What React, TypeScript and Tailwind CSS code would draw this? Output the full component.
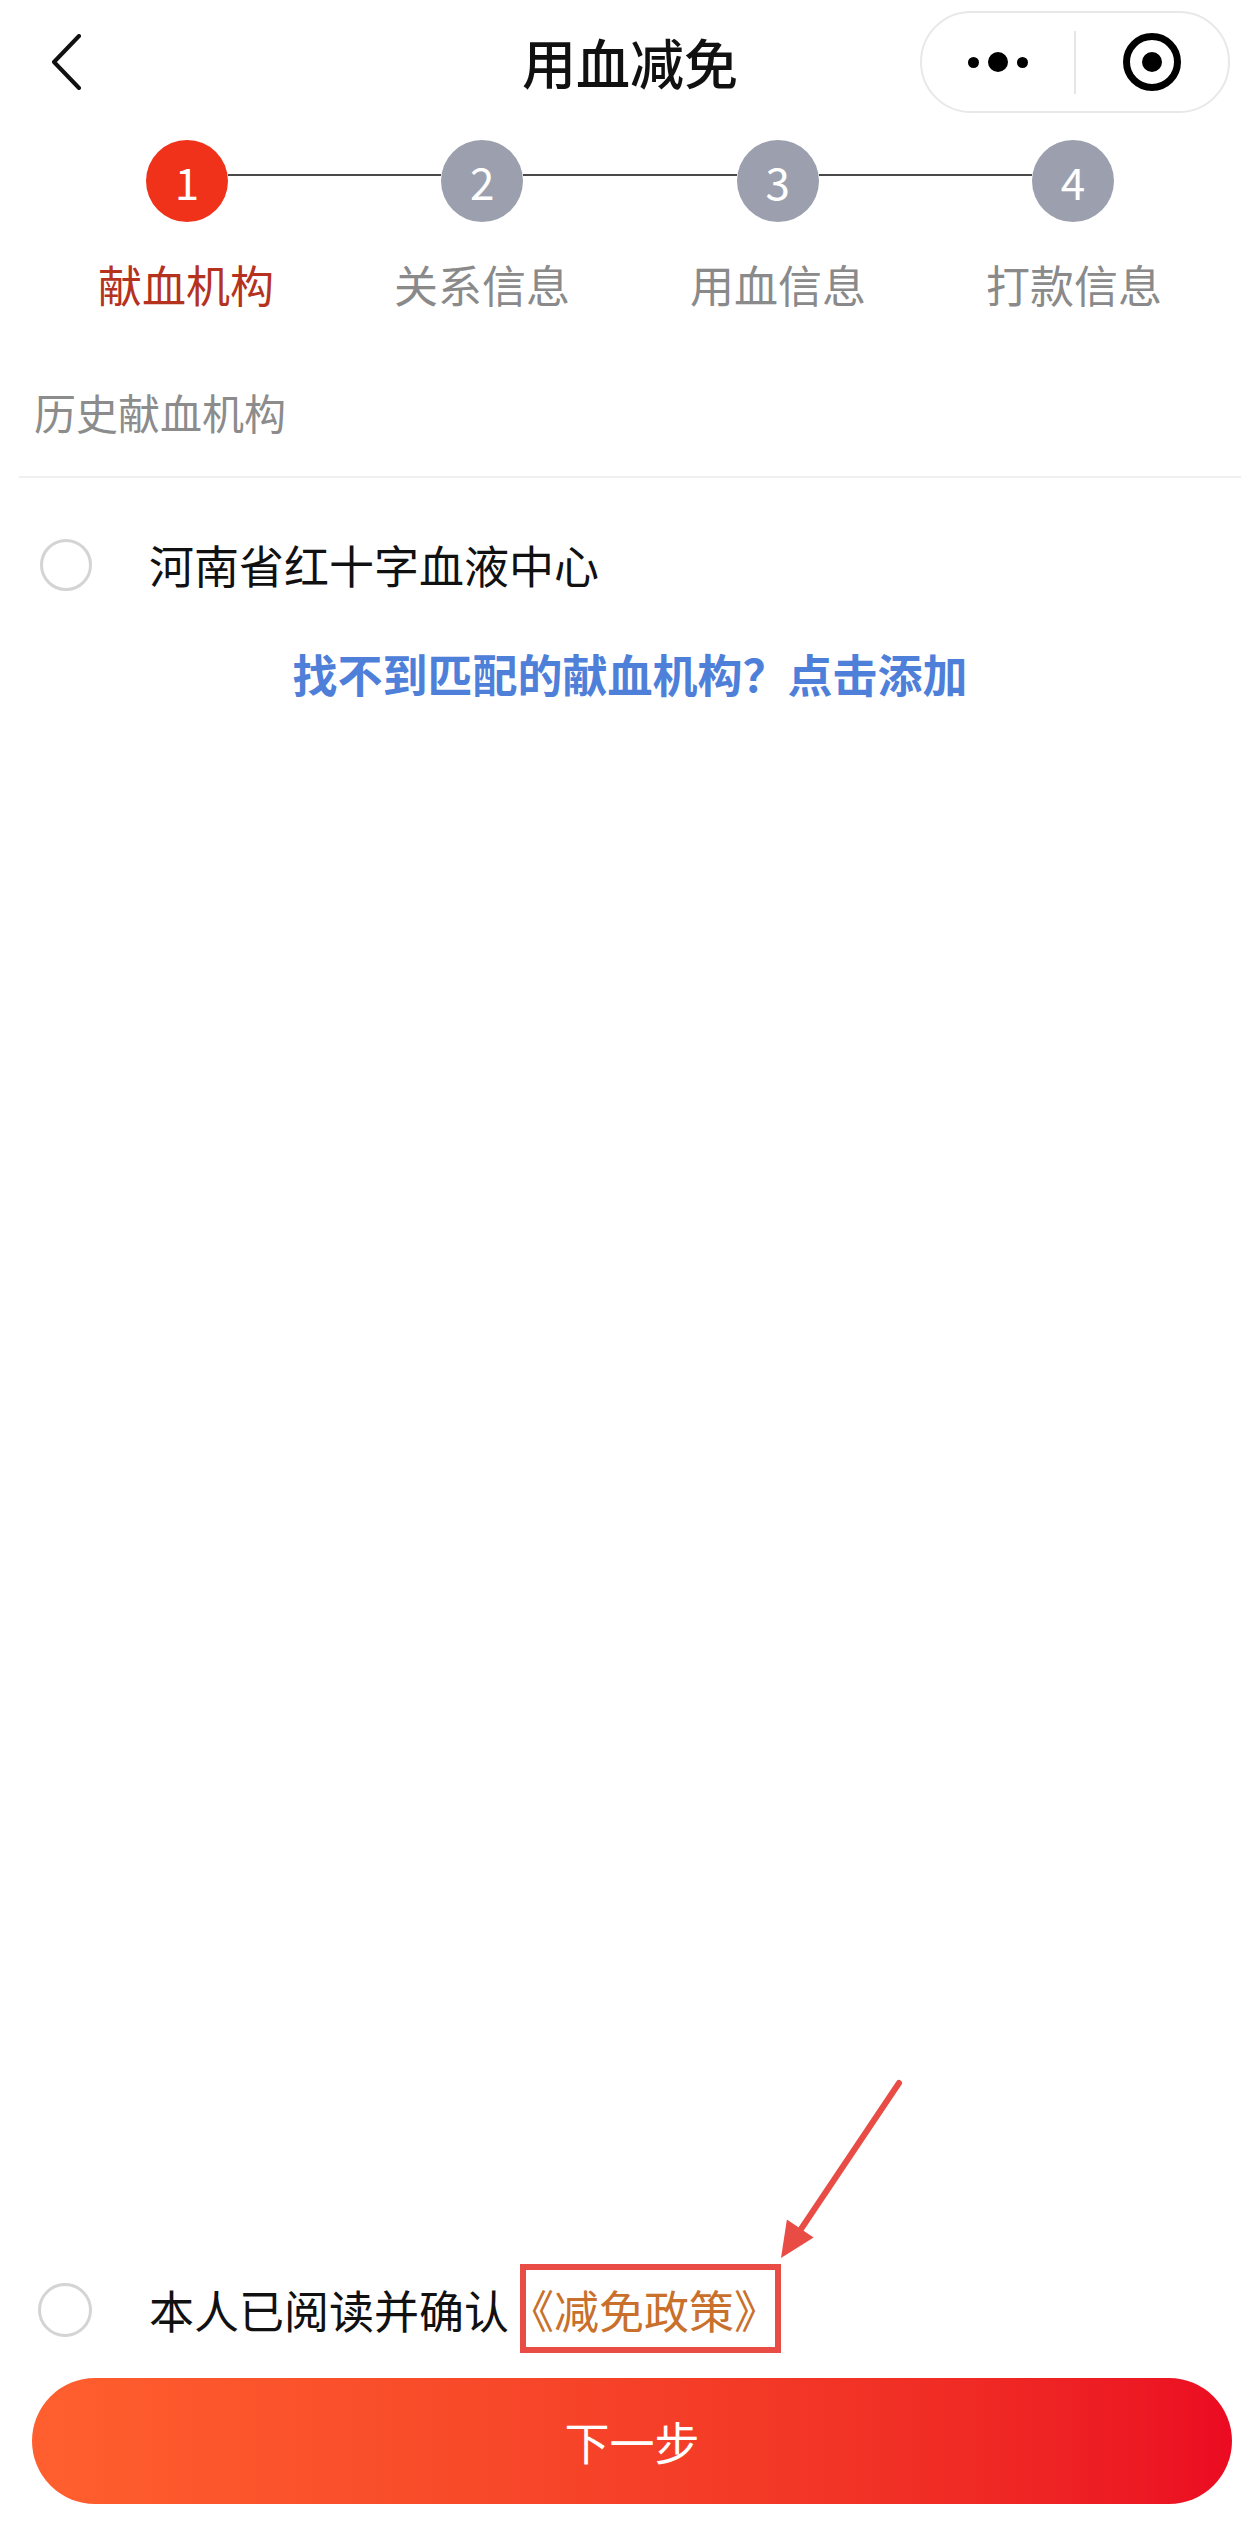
import React from "react";

const steps = ["献血机构", "关系信息", "用血信息", "打款信息"];

export default function App() {
  return (
    <div className="relative w-full h-[2533px] bg-white flex flex-col overflow-hidden font-['Noto_Sans_CJK_SC',sans-serif]">
      {/* Header */}
      <div className="grid grid-cols-[1fr_auto_1fr] items-center h-[124px]">
        <div className="flex items-center pl-[51px]">
          <svg width="32" height="56" viewBox="0 0 32 56" fill="none">
            <polyline points="28,2 3,28 28,54" stroke="#111" strokeWidth="4" strokeLinecap="round" strokeLinejoin="round" />
          </svg>
        </div>
        <div className="text-[54px] leading-[64px] font-medium text-[#111]">用血减免</div>
        <div className="flex justify-end pr-[30px]">
          <div className="flex items-center w-[310px] h-[102px] rounded-full border-[2px] border-[#e8e8e8] bg-white">
            <div className="flex-1 flex items-center justify-center gap-[9px]">
              <span className="w-[11px] h-[11px] rounded-full bg-black" />
              <span className="w-[20px] h-[20px] rounded-full bg-black" />
              <span className="w-[11px] h-[11px] rounded-full bg-black" />
            </div>
            <div className="w-[2px] h-[63px] bg-[#e6e6e6]" />
            <div className="flex-1 flex items-center justify-center">
              <svg width="58" height="58" viewBox="0 0 58 58">
                <circle cx="29" cy="29" r="25.5" stroke="#000" strokeWidth="7" fill="none" />
                <circle cx="29" cy="29" r="10" fill="#000" />
              </svg>
            </div>
          </div>
        </div>
      </div>

      {/* Stepper circles */}
      <div className="flex items-center px-[146px] mt-[16px]">
        {steps.map((_, i) => (
          <React.Fragment key={i}>
            <div
              className={
                "w-[82px] h-[82px] rounded-full flex items-center justify-center text-white text-[44px] leading-none shrink-0 " +
                (i === 0 ? "bg-[#f0321a]" : "bg-[#9ca0ae]")
              }
            >
              {i + 1}
            </div>
            {i < steps.length - 1 && <div className="flex-1 h-[2px] bg-[#4a4a4a] mb-[12px]" />}
          </React.Fragment>
        ))}
      </div>

      {/* Stepper labels */}
      <div className="grid grid-cols-4 px-[38px] mt-[32px]">
        {steps.map((s, i) => (
          <div
            key={s}
            className={"text-center text-[44px] leading-[60px] " + (i === 0 ? "text-[#b5321f]" : "text-[#8a8a8a]")}
          >
            {s}
          </div>
        ))}
      </div>

      {/* Section title */}
      <div className="mt-[68px] pl-[34px] text-[42px] leading-[60px] text-[#8c8c8c]">历史献血机构</div>
      <div className="mt-[34px] mx-[19px] h-[2px] bg-[#f0f0f0]" />

      {/* Option row */}
      <div className="mt-[57px] flex items-center h-[60px] pl-[40px]">
        <div className="w-[52px] h-[52px] rounded-full border-[3px] border-[#d4d4d4] shrink-0" />
        <div className="ml-[57px] text-[45px] leading-[60px] text-[#111]">河南省红十字血液中心</div>
      </div>

      {/* Link */}
      <div className="mt-[49px] text-center text-[45px] leading-[60px] font-bold text-[#4f80d9]">
        找不到匹配的献血机构？点击添加
      </div>

      {/* Bottom */}
      <div className="mt-auto pb-[29px]">
        <div className="flex items-center h-[60px] pl-[38px]">
          <div className="w-[54px] h-[54px] rounded-full border-[3px] border-[#d4d4d4] shrink-0" />
          <div className="ml-[57px] text-[45px] leading-[60px] text-[#111] whitespace-nowrap">
            本人已阅读并确认<span className="text-[#c8702c]">《减免政策》</span>
          </div>
        </div>
        <div className="mt-[38px] ml-[32px] mr-[28px] h-[126px] rounded-full bg-linear-to-r from-[#ff5f2e] to-[#eb0a22] flex items-center justify-center">
          <span className="text-white text-[45px] leading-none">下一步</span>
        </div>
      </div>

      {/* Annotation overlay */}
      <svg
        className="absolute left-0 top-0 pointer-events-none"
        width="1260"
        height="2533"
        viewBox="0 0 1260 2533"
        fill="none"
      >
        <rect x="523" y="2267" width="255" height="83" stroke="#e84c45" strokeWidth="6" fill="none" />
        <line x1="899" y1="2083" x2="795" y2="2238" stroke="#e84c45" strokeWidth="6" strokeLinecap="round" />
        <polygon points="781,2258 813.6,2237.4 786.9,2219.5" fill="#e84c45" />
      </svg>
    </div>
  );
}
